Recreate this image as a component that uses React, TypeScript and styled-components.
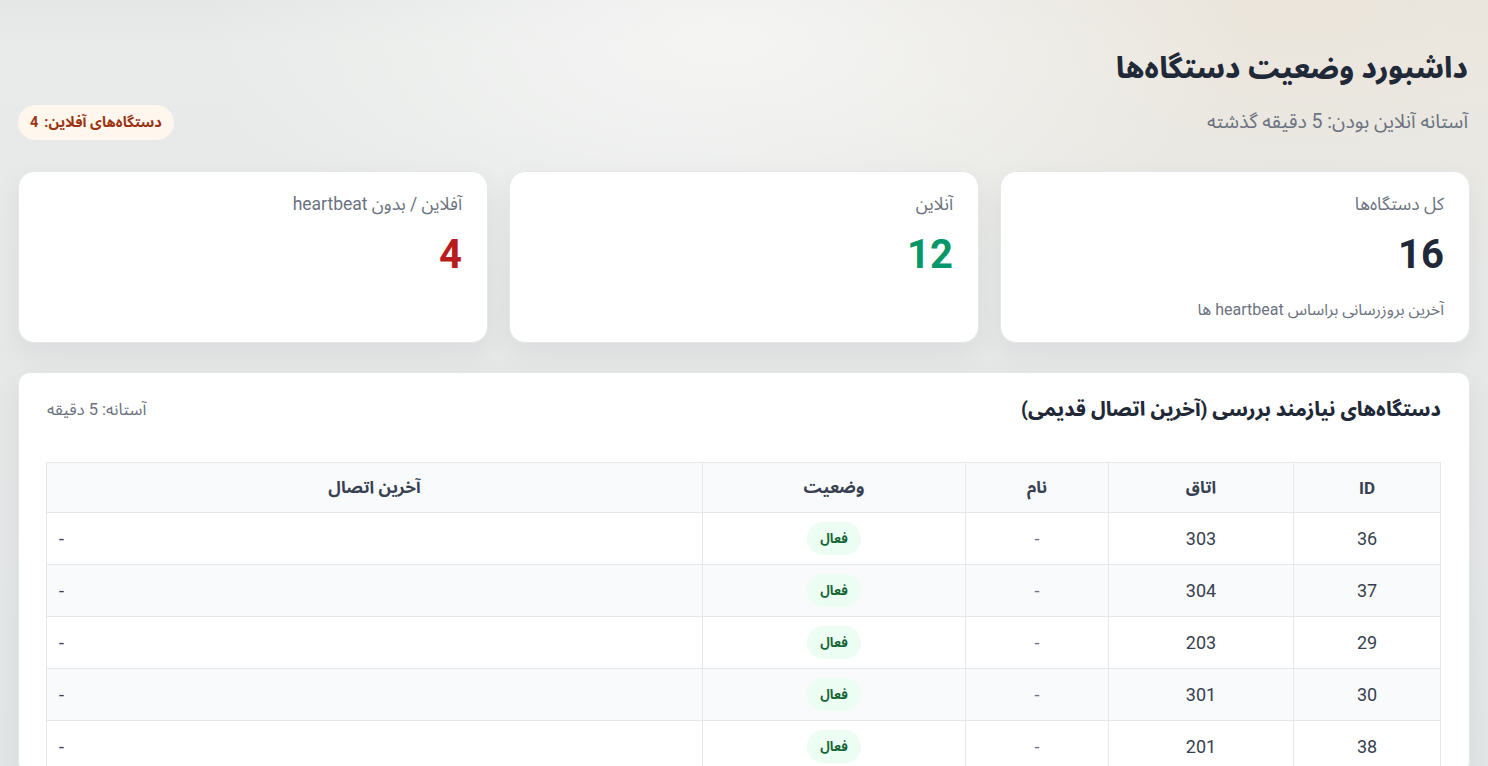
import React from "react";
import styled, { createGlobalStyle } from "styled-components";

const GlobalStyle = createGlobalStyle`
  * { box-sizing: border-box; }
  html, body {
    margin: 0;
    padding: 0;
  }
  body {
    font-family: Roboto, "Noto Sans Arabic", "DejaVu Sans", sans-serif;
    color: #1f2937;
    background:
      radial-gradient(ellipse 520px 260px at 720px 40px, rgba(246,246,245,0.9), rgba(246,246,245,0) 100%),
      radial-gradient(ellipse 700px 300px at 1300px 0px, rgba(236,229,218,0.95), rgba(236,229,218,0) 100%),
      linear-gradient(180deg, #e4e7e6 0%, #e8ebe9 6%, #e6e8e8 50%, #e3e6e7 100%);
    min-height: 766px;
  }
`;

const Page = styled.div`
  direction: rtl;
  padding: 48px 20px 0 20px;
`;

const Header = styled.header`
  display: flex;
  justify-content: space-between;
  align-items: flex-end;
`;

const TitleBlock = styled.div`
  display: flex;
  flex-direction: column;
`;

const Title = styled.h1`
  margin: 0;
  font-size: 29px;
  line-height: 40px;
  font-weight: 800;
  color: #1f2937;
`;

const Subtitle = styled.p`
  margin: 16px 0 0;
  font-size: 19.5px;
  line-height: 36px;
  color: #6b7280;
`;

const OfflineBadge = styled.span`
  display: inline-flex;
  align-items: center;
  gap: 6px;
  padding: 0 12px;
  height: 35px;
  margin-left: -2px;
  border-radius: 18px;
  background: #fff7ed;
  color: #9a3412;
  font-size: 14.5px;
  font-weight: 700;
`;

const Cards = styled.section`
  display: grid;
  grid-template-columns: repeat(3, 1fr);
  gap: 21px;
  margin: 31px -2px 0;
`;

const Card = styled.div`
  background: #ffffff;
  border: 1px solid #e5e7eb;
  border-radius: 16px;
  padding: 21px 25px 22px;
  box-shadow: 0 10px 30px rgba(15, 23, 42, 0.06);
  min-height: 172px;
`;

const CardLabel = styled.div`
  font-size: 17.5px;
  line-height: 22px;
  color: #6b7280;
`;

const CardValue = styled.div<{ $tone: "dark" | "green" | "red" }>`
  margin-top: 16px;
  font-size: 40px;
  line-height: 48px;
  font-weight: 700;
  color: ${(p) => (p.$tone === "green" ? "#059669" : p.$tone === "red" ? "#b91c1c" : "#1f2937")};
`;

const CardNote = styled.div`
  margin-top: 21px;
  font-size: 16px;
  line-height: 20px;
  color: #6b7280;
`;

const Panel = styled.section`
  margin: 29px -2px 0;
  background: #ffffff;
  border: 1px solid #e5e7eb;
  border-radius: 12px;
  padding: 22px 28px 0;
  box-shadow: 0 10px 30px rgba(15, 23, 42, 0.06);
`;

const PanelHead = styled.div`
  display: flex;
  justify-content: space-between;
  align-items: center;
`;

const PanelTitle = styled.h2`
  margin: 0;
  font-size: 19.6px;
  line-height: 30px;
  font-weight: 800;
  color: #1f2937;
`;

const PanelHint = styled.span`
  font-size: 16.5px;
  line-height: 24px;
  color: #6b7280;
`;

const Table = styled.table`
  width: 100%;
  margin-top: 37px;
  border-collapse: collapse;
  table-layout: fixed;
`;

const Th = styled.th<{ $w: number }>`
  width: ${(p) => p.$w}px;
  height: 50px;
  border: 1px solid #e5e7eb;
  background: #f9fafb;
  font-size: 17px;
  font-weight: 700;
  color: #374151;
  text-align: center;
`;

const Tr = styled.tr`
  &:nth-child(even) td {
    background: #f9fafb;
  }
`;

const Td = styled.td<{ $align?: "left" | "center"; $muted?: boolean }>`
  height: 52px;
  border: 1px solid #e5e7eb;
  background: #ffffff;
  font-size: 18px;
  color: ${(p) => (p.$muted ? "#6b7280" : "#374151")};
  text-align: ${(p) => p.$align ?? "center"};
  padding: 0 12px;
`;

const StatusPill = styled.span`
  display: inline-block;
  padding: 0 13px;
  height: 33px;
  line-height: 33px;
  border-radius: 17px;
  background: #ecfdf3;
  color: #166534;
  font-size: 13px;
  font-weight: 700;
  vertical-align: middle;
`;

const rows = [
  { id: 36, room: 303 },
  { id: 37, room: 304 },
  { id: 29, room: 203 },
  { id: 30, room: 301 },
  { id: 38, room: 201 },
];

export default function App() {
  return (
    <>
      <GlobalStyle />
      <Page>
        <Header>
          <TitleBlock>
            <Title>داشبورد وضعیت دستگاه‌ها</Title>
            <Subtitle>آستانه آنلاین بودن: 5 دقیقه گذشته</Subtitle>
          </TitleBlock>
          <OfflineBadge>
            <span>دستگاه‌های آفلاین:</span>
            <span>4</span>
          </OfflineBadge>
        </Header>

        <Cards>
          <Card>
            <CardLabel>کل دستگاه‌ها</CardLabel>
            <CardValue $tone="dark">16</CardValue>
            <CardNote>آخرین بروزرسانی براساس heartbeat ها</CardNote>
          </Card>
          <Card>
            <CardLabel>آنلاین</CardLabel>
            <CardValue $tone="green">12</CardValue>
          </Card>
          <Card>
            <CardLabel>آفلاین / بدون heartbeat</CardLabel>
            <CardValue $tone="red">4</CardValue>
          </Card>
        </Cards>

        <Panel>
          <PanelHead>
            <PanelTitle>دستگاه‌های نیازمند بررسی (آخرین اتصال قدیمی)</PanelTitle>
            <PanelHint>آستانه: 5 دقیقه</PanelHint>
          </PanelHead>
          <Table>
            <thead>
              <tr>
                <Th $w={147}>ID</Th>
                <Th $w={185}>اتاق</Th>
                <Th $w={143}>نام</Th>
                <Th $w={263}>وضعیت</Th>
                <Th $w={656}>آخرین اتصال</Th>
              </tr>
            </thead>
            <tbody>
              {rows.map((r) => (
                <Tr key={r.id}>
                  <Td>{r.id}</Td>
                  <Td>{r.room}</Td>
                  <Td $muted>-</Td>
                  <Td>
                    <StatusPill>فعال</StatusPill>
                  </Td>
                  <Td $align="left">-</Td>
                </Tr>
              ))}
            </tbody>
          </Table>
        </Panel>
      </Page>
    </>
  );
}
